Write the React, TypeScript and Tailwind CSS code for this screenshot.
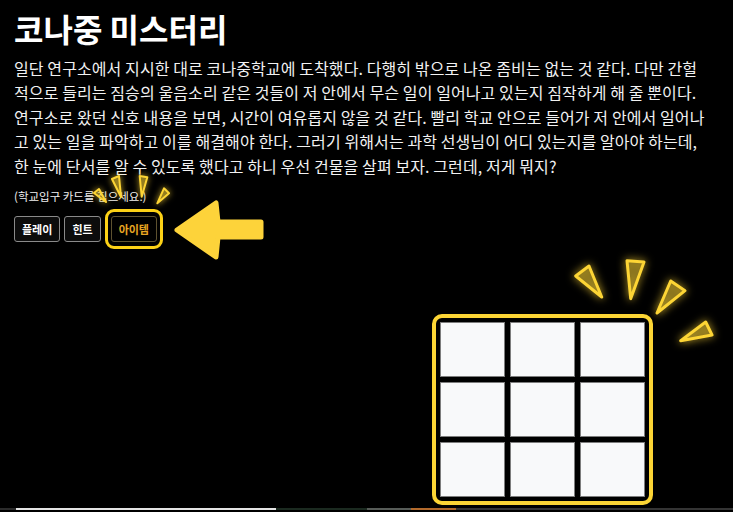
const lines = [
  '일단 연구소에서 지시한 대로 코나중학교에 도착했다. 다행히 밖으로 나온 좀비는 없는 것 같다. 다만 간헐',
  '적으로 들리는 짐승의 울음소리 같은 것들이 저 안에서 무슨 일이 일어나고 있는지 짐작하게 해 줄 뿐이다.',
  '연구소로 왔던 신호 내용을 보면, 시간이 여유롭지 않을 것 같다. 빨리 학교 안으로 들어가 저 안에서 일어나',
  '고 있는 일을 파악하고 이를 해결해야 한다. 그러기 위해서는 과학 선생님이 어디 있는지를 알아야 하는데,',
  '한 눈에 단서를 알 수 있도록 했다고 하니 우선 건물을 살펴 보자. 그런데, 저게 뭐지?',
]

const buttonRays = [
  '5,21 10,17 17,30',
  '23,7 30,4 32,25',
  '50.7,4 58.3,5.3 52.7,24.7',
  '75,16.3 80,21.3 68.3,31.3',
]

const gridRays = [
  '6.7,23 20,13 32.7,44',
  '58,7.7 75,9 61.7,45.7',
  '101.7,28 116,37.7 88,60',
  '136.7,69 143,82 111.7,87.7',
]

const strip = [
  { w: 'w-[16px]', c: 'bg-[#2b2b2b]' },
  { w: 'w-[260px]', c: 'bg-[#e4e4e4]' },
  { w: 'w-[91px]', c: 'bg-[#1b2a20]' },
  { w: 'w-[44px]', c: 'bg-[#575c58]' },
  { w: 'w-[45px]', c: 'bg-[#b36a2c]' },
  { w: 'flex-1', c: 'bg-[#343434]' },
]

function Rays({ points, stroke }: { points: string[]; stroke: number }) {
  return (
    <>
      {points.map((p) => (
        <polygon
          key={p}
          points={p}
          fill="rgba(253,213,53,0.28)"
          stroke="#fdd535"
          strokeWidth={stroke}
          strokeLinejoin="round"
        />
      ))}
    </>
  )
}

export default function App() {
  return (
    <div className="min-h-[512px] bg-black text-white font-['Noto_Sans_CJK_KR','Noto_Sans',sans-serif] flex flex-col overflow-hidden">
      <div className="px-[14px] pt-[8px]">
        <h1 className="text-[32px] leading-[40px] font-bold text-white">코나중 미스터리</h1>

        <div className="mt-[8px] text-[16px] leading-[24.4px] tracking-[0.1px] text-[#f2f2f2]">
          {lines.map((l) => (
            <div key={l} className="whitespace-nowrap">{l}</div>
          ))}
        </div>

        <p className="mt-[10px] text-[11.5px] leading-[16px] text-[#f0f0f0]">(학교입구 카드를 집으세요.)</p>

        <div className="mt-[5px] h-[40px] flex items-center gap-1">
          <button className="h-[26px] px-[7px] rounded-[3px] border-[1.5px] border-[#8a8a8a] bg-[#0c0c0c] text-[11px] font-bold text-white">
            플레이
          </button>
          <button className="h-[26px] px-[7px] rounded-[3px] border-[1.5px] border-[#8a8a8a] bg-[#0c0c0c] text-[11px] font-bold text-white">
            힌트
          </button>
          <div className="relative h-[40px] border-[3px] border-[#fcd116] rounded-[9px] px-[3px] flex items-center">
            <button className="h-[26px] px-[7px] rounded-[3px] border-[1.5px] border-[#5e5230] bg-black text-[11px] font-bold text-[#e8a622]">
              아이템
            </button>
            <svg
              className="absolute left-[-19px] top-[-40px] drop-shadow-[0_0_3px_rgba(253,213,53,0.9)]"
              width="87"
              height="36"
              viewBox="0 0 87 36"
            >
              <Rays points={buttonRays} stroke={2} />
            </svg>
          </div>
          <svg className="ml-[4px] shrink-0" width="96" height="62" viewBox="0 0 96 62">
            <polygon
              points="6,32 45,5 47,24 90,24 90,39 47,39 45,59"
              fill="#fdd33a"
              stroke="#fdd33a"
              strokeWidth="5"
              strokeLinejoin="round"
            />
          </svg>
        </div>
      </div>

      <div className="mt-[65px] flex justify-end pr-[80px]">
        <div className="relative border-[4px] border-[#fcd535] rounded-[10px] p-[4px] bg-black">
          <div className="grid grid-cols-[repeat(3,65px)] grid-rows-[repeat(3,55px)] gap-[5px]">
            {Array.from({ length: 9 }).map((_, i) => (
              <div key={i} className="bg-[#f8f9fa] border border-[#7d7d7d]" />
            ))}
          </div>
          <svg
            className="absolute left-[133px] top-[-65px] drop-shadow-[0_0_4px_rgba(253,213,53,0.9)]"
            width="150"
            height="95"
            viewBox="0 0 150 95"
          >
            <Rays points={gridRays} stroke={3} />
          </svg>
        </div>
      </div>

      <div className="mt-[3px] h-[2px] flex">
        {strip.map((s, i) => (
          <div key={i} className={`${s.w} ${s.c}`} />
        ))}
      </div>
    </div>
  )
}
